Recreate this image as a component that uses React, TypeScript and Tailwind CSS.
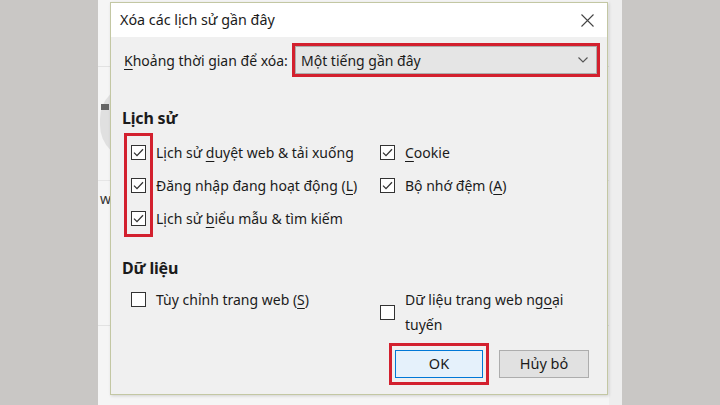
import React from "react";

function Box({ checked }: { checked?: boolean }) {
  return (
    <span className="w-[15px] h-[15px] border border-[#333333] bg-white flex items-center justify-center shrink-0">
      {checked && (
        <svg width="11" height="9" viewBox="0 0 11 9">
          <path d="M1 4.6 L4 7.6 L10 1.2" stroke="#333333" strokeWidth="1.3" fill="none" />
        </svg>
      )}
    </span>
  );
}

function U({ children }: { children: React.ReactNode }) {
  return <span className="underline underline-offset-[3px] decoration-1">{children}</span>;
}

function Row({ checked, children }: { checked?: boolean; children: React.ReactNode }) {
  return (
    <div className="h-[33px] flex items-center gap-[10px]">
      <Box checked={checked} />
      <span className="whitespace-nowrap">{children}</span>
    </div>
  );
}

export default function App() {
  return (
    <div className="w-[720px] h-[405px] flex bg-[#c9c7c5] overflow-hidden text-[#1b1b1b] font-['Noto_Sans','Open_Sans',sans-serif] text-[14px]">
      <div className="w-[98px] shrink-0" />
      <div className="w-[524px] shrink-0 bg-[#f5f5f5] relative pl-[12px] pt-[2px]">
        {/* background page decorations */}
        <div className="absolute left-0 top-[66px] w-full h-px bg-[#e2e2e2]" />
        <div className="absolute left-0 top-[180px] w-full h-px bg-[#e6e6e6]" />
        <div className="absolute left-0 top-[325px] w-full h-px bg-[#e2e2e2]" />
        <div className="absolute left-[2px] top-[84px] w-[70px] h-[76px] rounded-full bg-[#e0e0e0]" />
        <div className="absolute left-[3px] top-[104px] w-[8px] h-[6px] bg-[#666666]" />
        <div className="absolute left-[2px] top-[188px] text-[14px] text-[#333333]">w</div>
        <div className="absolute right-0 top-0 w-[13px] h-full bg-[#eeeeee]" />

        {/* dialog */}
        <div className="relative w-[498px] h-[393px] border border-[#c3c7a3] bg-[#f0f0f0] shadow-[1px_1px_3px_rgba(0,0,0,0.15)] flex flex-col">
          <div className="h-[34px] bg-white flex items-center justify-between pl-[9px] pr-[13px] text-[14.3px]">
            <span>Xóa các lịch sử gần đây</span>
            <svg width="13" height="13" viewBox="0 0 13 13">
              <path d="M0.5 0.5 L12.5 12.5 M12.5 0.5 L0.5 12.5" stroke="#444444" strokeWidth="1.1" />
            </svg>
          </div>

          <div className="mt-[6px] flex items-center h-[34px] pl-[13px] pr-[7px]">
            <span className="w-[168px] shrink-0 whitespace-nowrap">
              <U>K</U>hoảng thời gian để xóa:
            </span>
            <div className="flex-1 h-full border-[3px] border-[#d3202e]">
              <div className="h-full border border-[#adadad] bg-[#e5e5e5] flex items-center justify-between pl-[5px] pr-[8px]">
                <span>Một tiếng gần đây</span>
                <svg width="10" height="6" viewBox="0 0 10 6">
                  <path d="M0.5 0.5 L5 5 L9.5 0.5" stroke="#555555" strokeWidth="1.1" fill="none" />
                </svg>
              </div>
            </div>
          </div>

          <div className="mt-[30px] pl-[11px] h-[22px] flex items-center text-[16px] tracking-[-0.2px] font-bold">Lịch sử</div>

          <div className="relative mt-[7px] grid grid-cols-[249px_1fr] pl-[20px]">
            <div className="absolute left-[13px] top-[-3px] w-[29px] h-[104px] border-[3px] border-[#d3202e]" />
            <div className="flex flex-col">
              <Row checked>
                Lịch sử <U>d</U>uyệt web &amp; tải xuống
              </Row>
              <Row checked>
                Đăng nhập đang hoạt động (<U>L</U>)
              </Row>
              <Row checked>
                Lịch sử <U>b</U>iểu mẫu &amp; tìm kiếm
              </Row>
            </div>
            <div className="flex flex-col">
              <Row checked>
                <U>C</U>ookie
              </Row>
              <Row checked>
                Bộ nhớ đệm (<U>A</U>)
              </Row>
            </div>
          </div>

          <div className="mt-[22px] pl-[11px] h-[22px] flex items-center text-[16px] tracking-[-0.2px] font-bold">Dữ liệu</div>

          <div className="mt-[4px] grid grid-cols-[249px_1fr] pl-[20px] items-start">
            <Row>
              Tùy chỉnh trang web (<U>S</U>)
            </Row>
            <div className="mt-[4px] flex items-center gap-[10px]">
              <Box />
              <span className="leading-[25px]">
                Dữ liệu trang web ng<U>o</U>ại
                <br />
                tuyến
              </span>
            </div>
          </div>

          <div className="mt-auto mb-[9px] flex justify-end items-center gap-[10px] pr-[18px]">
            <div className="border-[3px] border-[#d3202e] px-[3px] py-[4px]">
              <div className="w-[88px] h-[28px] border border-[#0078d7] bg-[#e5f1fb] flex items-center justify-center text-[14.5px]">
                OK
              </div>
            </div>
            <div className="w-[90px] h-[28px] border border-[#adadad] bg-[#e1e1e1] flex items-center justify-center text-[14.5px]">
              Hủy bỏ
            </div>
          </div>
        </div>
      </div>
      <div className="flex-1" />
    </div>
  );
}
